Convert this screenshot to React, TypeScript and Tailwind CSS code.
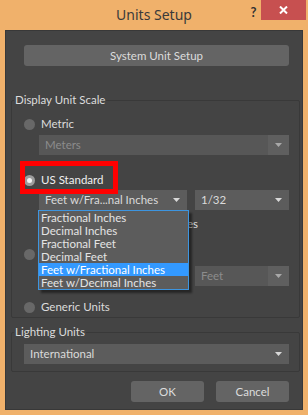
import React from "react";

const font = { fontFamily: 'Lato, "Noto Sans", sans-serif' };

function Arrow({ dim }: { dim?: boolean }) {
  return (
    <svg width="7" height="4" viewBox="0 0 7 4" className="shrink-0">
      <polygon points="0,0 7,0 3.5,4" fill={dim ? "#a8a8a8" : "#d8d8d8"} />
    </svg>
  );
}

function Radio({ on }: { on?: boolean }) {
  return on ? (
    <span className="flex h-[11px] w-[11px] shrink-0 items-center justify-center rounded-full bg-[#9c9c9c]">
      <span className="h-[5px] w-[5px] rounded-full bg-[#f2f2f2]" />
    </span>
  ) : (
    <span className="h-[11px] w-[11px] shrink-0 rounded-full bg-[#686868]" />
  );
}

function Drop({
  label,
  className,
  dim,
}: {
  label: string;
  className: string;
  dim?: boolean;
}) {
  return (
    <div
      className={`flex h-[20px] items-center ${
        dim ? "bg-[#575757] text-[#8c8c8c]" : "bg-[#5c5c5c] text-[#dadada]"
      } ${className}`}
    >
      <span className="flex-1 truncate pl-[6px] leading-[20px]">{label}</span>
      <span
        className={`flex h-full w-[21px] shrink-0 items-center justify-center ${
          dim ? "bg-[#5f5f5f]" : ""
        }`}
      >
        <Arrow dim={dim} />
      </span>
    </div>
  );
}

const options = [
  "Fractional Inches",
  "Decimal Inches",
  "Fractional Feet",
  "Decimal Feet",
  "Feet w/Fractional Inches",
  "Feet w/Decimal Inches",
];

export default function App() {
  return (
    <div
      className="flex h-[415px] w-[308px] flex-col bg-[#f0b16b] text-[11.5px] leading-[14px]"
      style={font}
    >
      {/* title bar */}
      <div className="grid h-[30px] shrink-0 grid-cols-[62px_1fr_62px]">
        <div />
        <div
          className="pt-[4px] text-center text-[14px] leading-[22px] text-[#3a3a3a]"
          style={{ fontFamily: '"Noto Sans", sans-serif' }}
        >
          Units Setup
        </div>
        <div className="flex items-start">
          <span className="w-[15px] pt-[4px] text-center text-[13px] font-bold leading-[16px] text-[#333]">
            ?
          </span>
          <button className="flex h-[20px] w-[45px] items-center justify-center bg-[#c75050]">
            <svg width="9" height="8" viewBox="0 0 9 8">
              <path d="M1 0.5 L8 7.5 M8 0.5 L1 7.5" stroke="#fff" strokeWidth="2" />
            </svg>
          </button>
        </div>
      </div>

      {/* client */}
      <div className="relative ml-[5px] h-[380px] w-[298px] border border-[#383838] bg-[#444444]">
        <button className="ml-[18px] mt-[14px] flex h-[21px] w-[265px] items-center justify-center rounded-[3px] bg-[#646464] text-[#dcdcdc]">
          System Unit Setup
        </button>

        {/* Display Unit Scale */}
        <div className="ml-[5px] mt-[34px] h-[218px] w-[289px] rounded-[2px] border border-[#393939]">
          <div className="-mt-[8px] ml-[2px] h-[14px] w-fit bg-[#444444] px-[1px] leading-[14px] text-[#dcdcdc]">
            Display Unit Scale
          </div>

          <div className="ml-[12px] mt-[10px] flex h-[14px] items-center gap-[6px] text-[#dcdcdc]">
            <Radio />
            <span>Metric</span>
          </div>
          <Drop label="Meters" dim className="ml-[27px] mt-[4px] w-[250px]" />

          <div className="ml-[12px] mt-[18px] flex h-[14px] items-center gap-[6px] text-[#f0f0f0]">
            <Radio on />
            <span>US Standard</span>
          </div>
          <div className="ml-[27px] mt-[3px] flex gap-[8px]">
            <Drop label="Feet w/Fra...nal Inches" className="w-[148px]" />
            <Drop label="1/32" className="w-[94px]" />
          </div>

          <div className="ml-[27px] mt-[7px] flex h-[14px] w-[159px] items-center gap-[3px] text-[#dcdcdc]">
            <span className="min-w-0 flex-1 truncate">Default Units:</span>
            <span className="flex items-center gap-[3px]">
              <Radio on />
              Feet
            </span>
            <span className="flex items-center gap-[3px]">
              <Radio />
              Inches
            </span>
          </div>

          <div className="ml-[12px] mt-[16px] flex h-[14px] items-center gap-[6px] text-[#dcdcdc]">
            <Radio />
            <span>Custom</span>
          </div>
          <div className="ml-[27px] mt-[5px] flex w-[250px] items-center gap-[6px] text-[#8c8c8c]">
            <span className="h-[20px] w-[44px] bg-[#575757] pl-[4px] leading-[20px]">FL</span>
            <span>=</span>
            <span className="h-[20px] w-[80px] bg-[#575757] pl-[4px] leading-[20px]">660.0</span>
            <Drop label="Feet" dim className="ml-auto w-[94px]" />
          </div>

          <div className="ml-[12px] mt-[14px] flex h-[14px] items-center gap-[6px] text-[#dcdcdc]">
            <Radio />
            <span>Generic Units</span>
          </div>
        </div>

        {/* Lighting Units */}
        <div className="ml-[5px] mt-[14px] h-[40px] w-[289px] rounded-[2px] border border-[#393939]">
          <div className="-mt-[8px] ml-[2px] h-[14px] w-fit bg-[#444444] px-[1px] leading-[14px] text-[#dcdcdc]">
            Lighting Units
          </div>
          <Drop label="International" className="ml-[12px] mt-[5px] w-[265px]" />
        </div>

        <div className="mr-[13px] mt-[9px] flex justify-end gap-[12px]">
          <button className="h-[21px] w-[73px] rounded-[3px] bg-[#646464] text-[#dcdcdc]">
            OK
          </button>
          <button className="h-[21px] w-[73px] rounded-[3px] bg-[#646464] text-[#dcdcdc]">
            Cancel
          </button>
        </div>

        {/* open dropdown list */}
        <div className="absolute left-[32px] top-[179px] w-[151px] border border-[#3d95e0] bg-[#5c5c5c] shadow-[3px_3px_2px_rgba(0,0,0,0.45)]">
          {options.map((o, i) => (
            <div
              key={o}
              className={`h-[13px] pl-[2px] leading-[13px] ${
                i === 4 ? "bg-[#3399ff] text-white" : "text-[#e4e4e4]"
              }`}
            >
              {o}
            </div>
          ))}
        </div>

        {/* red highlight annotation */}
        <div className="absolute left-[14px] top-[130px] h-[33px] w-[98px] border-[5px] border-[#ff0000]" />
      </div>
    </div>
  );
}
